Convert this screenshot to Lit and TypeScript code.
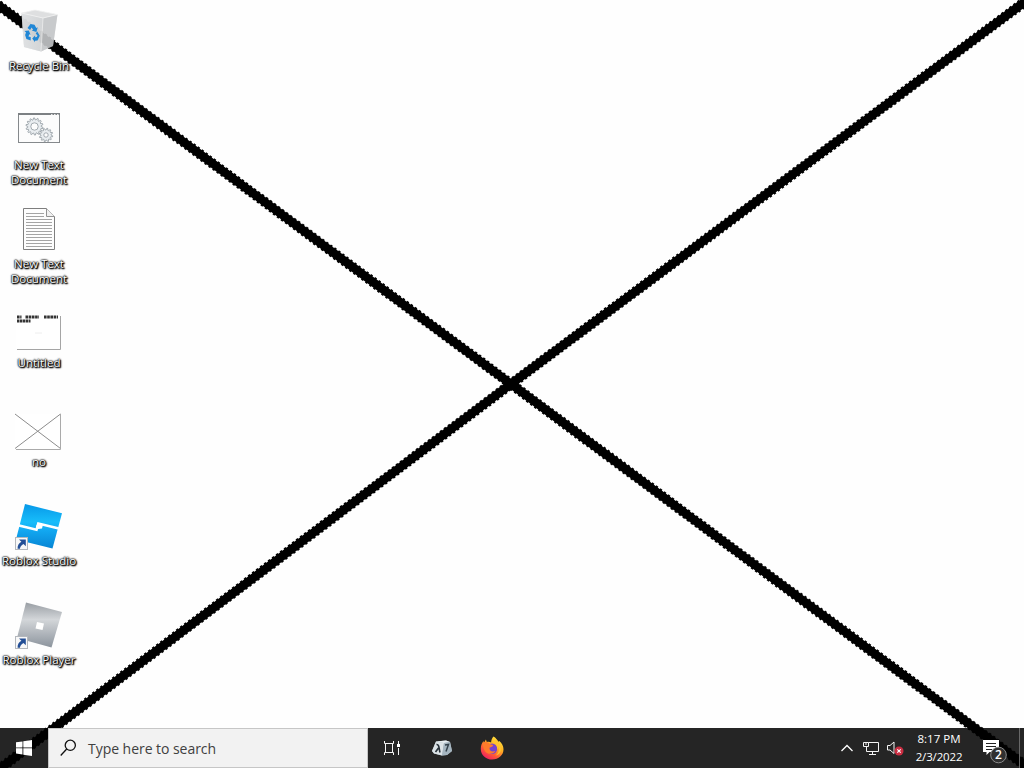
import { LitElement, html, css, svg, TemplateResult } from 'lit';
import { customElement, property } from 'lit/decorators.js';

type IconKind = 'bin' | 'gears' | 'text' | 'untitled' | 'cross' | 'studio' | 'player';

interface DesktopItem {
	kind: IconKind;
	lines: string[];
}

const ITEMS: DesktopItem[] = [
	{ kind: 'bin', lines: ['Recycle Bin'] },
	{ kind: 'gears', lines: ['New Text', 'Document'] },
	{ kind: 'text', lines: ['New Text', 'Document'] },
	{ kind: 'untitled', lines: ['Untitled'] },
	{ kind: 'cross', lines: ['no'] },
	{ kind: 'studio', lines: ['Roblox Studio'] },
	{ kind: 'player', lines: ['Roblox Player'] },
];

/** Both diagonals of the wallpaper */
const DIAGONALS = 'M-10 -1L511 384L1034 772M1034 -5L511 384L-10 776';

/** Outline of a cog centered on cx, cy */
function gearPath(cx: number, cy: number, outer: number, inner: number, teeth: number): string {
	const points: string[] = [];
	const step = (Math.PI * 2) / teeth;
	for (let i = 0; i < teeth; i++) {
		for (const [offset, r] of [
			[0, inner],
			[0.25, outer],
			[0.5, outer],
			[0.75, inner],
		]) {
			const a = step * (i + offset);
			points.push(`${(cx + Math.cos(a) * r).toFixed(2)} ${(cy + Math.sin(a) * r).toFixed(2)}`);
		}
	}
	return `M${points.join('L')}Z`;
}

const shortcutArrow = svg`
	<rect x="0.5" y="35.5" width="12" height="12" fill="#f8f8f8" stroke="#b4b8bd" />
	<path d="M4 37.5h6.800v6.800l-2.300-2.200c-2.200 1.300-3.200 2.400-3.600 4.700H2.600c-.2-3.400 1.200-5.500 3.800-7z" fill="#244f96" />
`;

@customElement('desktop-icon')
export class DesktopIconElement extends LitElement {
	@property() kind!: IconKind;
	@property({ type: Array }) lines: string[] = [];

	protected render(): TemplateResult {
		return html`
			<svg width="48" height="48" viewBox="0 0 48 48">${this.picture()}</svg>
			<div class="label">${this.lines.map((line) => html`<span>${line}</span>`)}</div>
		`;
	}

	picture() {
		switch (this.kind) {
			case 'bin':
				return svg`
					<defs>
						<linearGradient id="front" x1="0" x2="1">
							<stop offset="0" stop-color="#dfe1e3" stop-opacity=".88" />
							<stop offset="1" stop-color="#cfd1d3" stop-opacity=".85" />
						</linearGradient>
					</defs>
					<path d="M6.500 6L20 3l22.500 4.500L38 39l-12 5.500L9 40z" fill="#d9dbdc" fill-opacity=".7" />
					<path d="M6.500 6L28 11l-2 33.500L9 40z" fill="url(#front)" />
					<path d="M28 11l14.500-3.500L38 39l-12 5.500z" fill="#bcbec0" fill-opacity=".7" />
					<path d="M6.500 6L20 3l22.500 4.500L28 11z" fill="#dedfe0" stroke="#f2f2f2" stroke-width=".8" />
					<path d="M28 11l-2 33.500" stroke="#f0f0f0" stroke-width=".7" />
					<g fill="#2187d6" transform="translate(0 .500)">
						<path d="M12.500 20.500l3-4 4 .7 1.800 3.200 1.400-.6-1.300 4.700-4.600-1.500 1.300-.7-1.500-2.200-1.500 2.300z" />
						<path d="M9.500 23.500l4.300-.6 1.800 4.300-1.300-.5-.8 2.300 2.200.6v3.300l-4.300-1.500-1.300-3.800.9-2.500z" />
						<path d="M22.300 24l2.500 4.200-2.300 4.800-2.500.3v1.500l-2.800-3.700 2.900-3v1.700l1.700-.2.700-1.700-1.800-2z" />
					</g>
				`;
			case 'gears':
				return svg`
					<rect x="3.500" y="7.500" width="41" height="29" fill="#fcfcfc" stroke="#85898c" />
					<path d="M3 8h42" stroke="#7c8083" stroke-width="2" />
					<path d="M36 8.500h1.500M39 8.500h1.500M42 8.500h1.500" stroke="#e8e8e8" />
					<g fill="#e9edf0" stroke="#8f989e" stroke-width=".8">
						<path d=${gearPath(19.5, 20.5, 8.6, 6.7, 14)} />
						<circle cx="19.500" cy="20.500" r="3.700" fill="#fcfcfc" />
						<path d=${gearPath(31, 29, 6.8, 5, 12)} />
						<circle cx="31" cy="29" r="2.200" fill="#fcfcfc" />
					</g>
				`;
			case 'text':
				return svg`
					<path d="M8.500 3.500h23l8 8v33h-31z" fill="#fdfdfd" stroke="#7e7e7e" />
					<path d="M31.500 3.500v8h8" fill="#f1f1f1" stroke="#929292" />
					<path
						d="M11 8.500h18M11 11.500h18M11 14.500h26M11 17.500h26M11 20.500h26M11 23.500h26M11 26.500h26M11 29.500h26M11 32.500h26M11 35.500h26M11 38.500h26M11 41.500h26"
						stroke="#a4a4a4"
					/>
				`;
			case 'untitled':
				return svg`
					<path d="M1 11h45v34H1z" fill="#fff" />
					<path d="M45.500 12v33.500H2" fill="none" stroke="#a5a5a5" />
					<g fill="none" stroke="#333" stroke-width="3">
						<path d="M2 13h4.500M10.500 13h13.500M29 13h14" stroke-dasharray="2.600 .6" />
						<path d="M2 17h13.500" stroke-dasharray="2.400 .5" />
					</g>
					<path d="M20 29h7" stroke="#eee" />
				`;
			case 'cross':
				return svg`
					<path d="M0 11h45v35H0z" fill="#fff" />
					<path d="M0 11l45.500 34.500M45.500 11L0 45.500" stroke="#8c8c8c" />
					<path d="M45.500 11v35.500H1" fill="none" stroke="#aaa" />
				`;
			case 'studio':
				return svg`
					<defs>
						<linearGradient id="blue" x1="0" y1="0" x2="0" y2="1">
							<stop offset="0" stop-color="#0798e8" />
							<stop offset=".4" stop-color="#18bdfa" />
							<stop offset=".6" stop-color="#12a7f0" />
							<stop offset="1" stop-color="#0785d4" />
						</linearGradient>
					</defs>
					<path d="M10 2l37 9.300-9.500 35.200L1 37.500z" fill="url(#blue)" />
					<path d="M2 23l19.500 4.800 1.800-6.300L46 27" fill="none" stroke="#fff" stroke-width="2.600" />
					<path d="M21 23.500l7-1-1 4-6 .800z" fill="#fff" />
					${shortcutArrow}
				`;
			case 'player':
				return svg`
					<defs>
						<linearGradient id="silver" x1="0" y1="0" x2="0" y2="1">
							<stop offset="0" stop-color="#999ea4" />
							<stop offset=".38" stop-color="#d3d6d9" />
							<stop offset="1" stop-color="#8c949d" />
						</linearGradient>
					</defs>
					<path d="M11 1.500l36 9.500-10.500 35.500L2 37z" fill="url(#silver)" />
					<path d="M22 21l7 1.600-1.500 6.500-7-1.500z" fill="#fff" />
					${shortcutArrow}
				`;
		}
	}

	static styles = css`
		:host {
			display: flex;
			flex-direction: column;
			align-items: center;
			width: 78px;
			height: 99px;
		}

		svg {
			display: block;
			flex: none;
		}

		.label {
			display: flex;
			flex-direction: column;
			align-items: center;
			margin-top: 3px;
			font: 11.5px/15px 'Open Sans', 'Noto Sans', sans-serif;
			white-space: nowrap;
			color: #fff;
			text-shadow:
				0 0 1px #000,
				0 0 2px #000,
				0 0 2px #000,
				1px 1px 1px #000,
				1px 1px 2px #000;
		}
	`;
}

@customElement('task-bar')
export class TaskBarElement extends LitElement {
	protected render(): TemplateResult {
		return html`
			<div class="start">
				<svg width="16" height="16" viewBox="0 0 16 16" fill="#fff">
					<path d="M0 2.300l6.500-.9v6.100H0zM7.300 1.300L16 0v7.500H7.300zM0 8.300h6.500v6.200L0 13.600zM7.300 8.300H16V16l-8.700-1.300z" />
				</svg>
			</div>
			<div class="search">
				<svg width="18" height="18" viewBox="0 0 18 18" fill="none" stroke="#111" stroke-width="1.300">
					<circle cx="10.300" cy="6.300" r="5.100" />
					<path d="M6.700 10L.7 16.500" />
				</svg>
				<span>Type here to search</span>
			</div>
			<div class="apps">
				<svg width="18" height="16" viewBox="0 0 18 16" fill="none" stroke="#f4f4f4">
					<path d="M1.500 1v2.500h9V1M1.500 15v-2.500h9V15M2.500 3.500h7v9h-7zM15.500 1v3M15.500 8v7" />
					<path d="M14 4h3v3h-3z" fill="#fff" stroke="none" />
				</svg>
				<svg width="22" height="16" viewBox="0 0 22 16">
					<path d="M5 1.500L15 .5l4 1.500 2 9-5 4-5 .500-8-2L1 11z" fill="#aebac3" />
					<path d="M5 1.500L15 .5l4 1.500-6 1z" fill="#e8eef2" />
					<path d="M5 1.500l8 1.500-2 12.500-8-2L1 11z" fill="#dce3e7" />
					<path d="M13 3l6-1 2 9-5 4-5 .500z" fill="#a5b5c0" />
					<path d="M5.500 4.500c3-.5 2.500 5 3.500 8M7.500 8l-3 4" fill="none" stroke="#28323a" stroke-width="1.600" />
					<path d="M14 5l3.500-.5-2.500 7" fill="none" stroke="#34424c" stroke-width="1.500" />
				</svg>
				<svg width="24" height="24" viewBox="0 0 24 24">
					<defs>
						<linearGradient id="fox" x1=".85" y1="0" x2=".2" y2="1">
							<stop offset="0" stop-color="#fff044" />
							<stop offset=".4" stop-color="#ffae23" />
							<stop offset=".68" stop-color="#ff5b36" />
							<stop offset="1" stop-color="#ec1765" />
						</linearGradient>
					</defs>
					<path
						d="M13.500.5c2.200 1.400 4 3.200 4.800 5.300l1-.8c2.600 2.300 4.200 5 4.200 8.300 0 6-4.900 10.200-11.300 10.200S.8 19 .8 12.900c0-3 1-5.800 2.700-7.800l.4 2 2-3.700.9 2.700c1.700-.5 3-.3 4.300.3.2-2.300.8-4.300 2.400-5.900z"
						fill="url(#fox)"
					/>
					<circle cx="12" cy="12.800" r="5.200" fill="#7542cf" />
					<path d="M3 6.500c3.200-1.300 6-.5 7.200 1.800l3 .8c-.5 1.900-2 2.200-3.700 2.600-.2 3 2.500 4.700 6 3.100-1.500 3.700-7.700 4.200-10.400.5C3.500 13 2.700 10 3 6.500z" fill="#ff7b2b" />
					<path d="M11.500 6c3.800.3 6.200 3.500 5.600 7.500 1-.8 1.200-2 1.100-3.200 1.700 3.300.4 7.500-2.700 9.200 5-1 6.500-5.200 5-10L16.500 4z" fill="#ffc42e" />
				</svg>
			</div>
			<div class="tray">
				<svg class="chevron" width="12" height="8" viewBox="0 0 12 8" fill="none" stroke="#fff" stroke-width="1.300">
					<path d="M.5 7L6 1.500 11.500 7" />
				</svg>
				<svg class="network" width="17" height="15" viewBox="0 0 17 15" fill="none" stroke="#f4f4f4">
					<path d="M5.500 1.500h10v9h-12V7M9.500 10.500v3M6 13.500h7M.5 1.500h5v4h-5zM3.500 5.500V8" />
					<path d="M2 3h2" />
				</svg>
				<svg class="sound" width="17" height="16" viewBox="0 0 17 16">
					<path d="M.5 5.500H3l4-3.500v11.500L3 10H.5z" fill="none" stroke="#f4f4f4" />
					<circle cx="12" cy="11" r="4.500" fill="#ca2e42" />
					<path d="M10.300 9.300l3.400 3.400M13.700 9.300l-3.400 3.400" stroke="#fff" stroke-width="1.100" />
				</svg>
				<div class="clock">
					<span class="time">8:17 PM</span>
					<span class="date">2/3/2022</span>
				</div>
				<svg class="notes" width="25" height="26" viewBox="0 0 25 26">
					<path d="M0 1h16v12H6.500L3.500 16v-3H0z" fill="#fff" />
					<path d="M3 4.500h10M3 7.500h10M3 10.500h6" stroke="#222" />
					<circle cx="15.500" cy="16" r="7.800" fill="#303030" stroke="#8b8b8b" />
					<text x="15.500" y="20.300" text-anchor="middle">2</text>
				</svg>
				<div class="peek"></div>
			</div>
		`;
	}

	static styles = css`
		:host {
			display: flex;
			height: 40px;
			background: rgba(0, 0, 0, 0.855);
			font-family: 'Open Sans', 'Noto Sans', sans-serif;
		}

		svg {
			display: block;
			flex: none;
		}

		.start {
			display: flex;
			align-items: center;
			justify-content: center;
			width: 48px;
		}

		.search {
			display: flex;
			align-items: center;
			gap: 10px;
			box-sizing: border-box;
			width: 320px;
			padding-left: 11px;
			background: #f2f2f2;
			border: 1px solid #c6c6c6;
			font-size: 14px;
			letter-spacing: -0.04px;
			color: #404040;
		}

		.apps {
			display: grid;
			grid-template-columns: 48px 52px 48px;
			align-items: center;
			justify-items: center;
		}

		.tray {
			display: flex;
			align-items: center;
			margin-left: auto;
		}

		.network {
			margin-left: 10px;
		}

		.sound {
			margin-left: 7px;
		}

		.clock {
			display: flex;
			flex-direction: column;
			align-items: center;
			width: 58px;
			margin-left: 6px;
			font-size: 11.5px;
			line-height: 18px;
			letter-spacing: -0.15px;
			white-space: nowrap;
			color: #fff;
		}

		.time {
			letter-spacing: 0;
		}

		.notes {
			margin-left: 15px;
			margin-top: 7px;
		}

		.notes text {
			font: 600 12px 'Open Sans', sans-serif;
			fill: #fff;
		}

		.peek {
			align-self: stretch;
			width: 5px;
			margin-left: 11px;
			border-left: 1px solid #686868;
			box-sizing: border-box;
		}
	`;
}

@customElement('app-root')
export class AppRootElement extends LitElement {
	protected render(): TemplateResult {
		return html`
			<svg class="wallpaper" width="1024" height="768" viewBox="0 0 1024 768">
				<path d=${DIAGONALS} />
				<path class="rough" d=${DIAGONALS} />
			</svg>
			<main>
				${ITEMS.map((item) => html`<desktop-icon .kind=${item.kind} .lines=${item.lines}></desktop-icon>`)}
			</main>
			<task-bar></task-bar>
		`;
	}

	static styles = css`
		:host {
			display: grid;
			grid-template-rows: 728px 40px;
			width: 1024px;
			height: 768px;
			overflow: hidden;
			background: #fefefe;
		}

		.wallpaper {
			grid-area: 1 / 1 / 3 / 2;
			fill: none;
			stroke: #000;
			stroke-width: 8.5px;
		}

		.rough {
			stroke-width: 10.5px;
			stroke-dasharray: 2.5 2.5;
		}

		main {
			grid-area: 1 / 1;
			display: flex;
			flex-direction: column;
			padding-top: 7px;
			z-index: 1;
		}

		task-bar {
			grid-area: 2 / 1;
			z-index: 1;
		}
	`;
}
